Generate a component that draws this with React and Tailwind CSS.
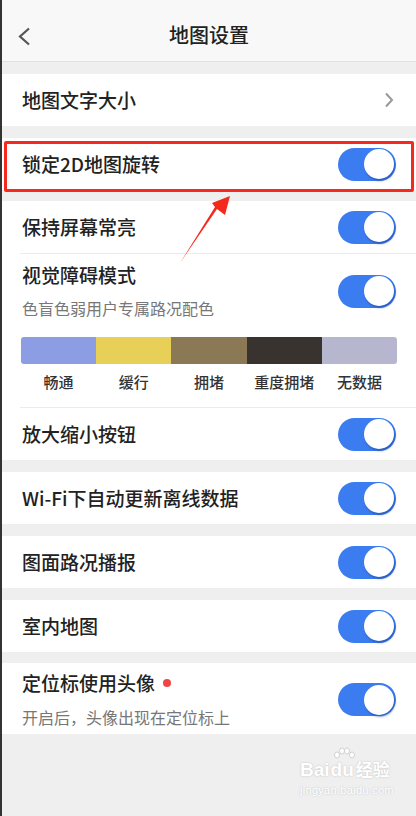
import React from "react";

const font = { fontFamily: '"Noto Sans CJK SC", "Noto Sans", sans-serif' };

function Toggle() {
  return (
    <div className="w-[58px] h-[33px] rounded-full bg-[#3b7cf0] flex items-center justify-end pr-[2px] shrink-0">
      <div className="w-[30px] h-[30px] rounded-full bg-white shadow-[1px_2px_2px_rgba(30,70,160,0.55)]" />
    </div>
  );
}

function Row({ label, children }) {
  return (
    <div className="h-[52px] bg-white flex items-center justify-between pl-[20px] pr-[20px]">
      <span className="text-[19px] font-medium text-[#222]">{label}</span>
      {children || <Toggle />}
    </div>
  );
}

const legend = [
  ["畅通", "bg-[#8c9de3]"],
  ["缓行", "bg-[#e8cf57]"],
  ["拥堵", "bg-[#8a7954]"],
  ["重度拥堵", "bg-[#38332f]"],
  ["无数据", "bg-[#b6b6cf]"],
];

export default function App() {
  return (
    <div className="relative w-[416px] min-h-[816px] bg-[#efefef] border-l-2 border-[#333]" style={font}>
      <header className="h-[62px] bg-[#f8f8f8] border-b border-[#e0e0e0] flex items-center justify-center pt-[8px] relative">
        <svg className="absolute left-[15px] top-[27px]" width="14" height="19" viewBox="0 0 14 19">
          <path d="M12 1.5 L3 9.5 L12 17.5" fill="none" stroke="#555" strokeWidth="2.2" />
        </svg>
        <h1 className="text-[20px] font-medium text-[#222]">地图设置</h1>
      </header>

      <div className="mt-3">
        <Row label="地图文字大小">
          <svg width="10" height="16" viewBox="0 0 10 16" className="mr-[2px]">
            <path d="M2 1.5 L8 8 L2 14.5" fill="none" stroke="#999" strokeWidth="2" />
          </svg>
        </Row>
      </div>

      <div className="mt-3">
        <Row label="锁定2D地图旋转" />
      </div>

      <div className="mt-[11px] bg-white">
        <Row label="保持屏幕常亮" />
        <div className="ml-[18px] h-px bg-[#ececec]" />
        <div className="pl-[20px] pr-[20px] pt-[8px] pb-[14px]">
          <div className="flex items-center justify-between">
            <div>
              <div className="text-[19px] leading-[26px] font-medium text-[#222]">视觉障碍模式</div>
              <div className="mt-[8px] text-[16px] leading-[24px] text-[#777]">色盲色弱用户专属路况配色</div>
            </div>
            <Toggle />
          </div>
          <div className="mt-[17px] -ml-px w-[376px] h-[27px] rounded-[3px] overflow-hidden flex">
            {legend.map(([t, c]) => (
              <div key={t} className={`flex-1 ${c}`} />
            ))}
          </div>
          <div className="mt-[7px] -ml-px w-[376px] flex">
            {legend.map(([t]) => (
              <div key={t} className="flex-1 text-center text-[15px] leading-[22px] font-medium text-[#333]">
                {t}
              </div>
            ))}
          </div>
        </div>
        <div className="ml-[18px] h-px bg-[#ececec]" />
        <Row label="放大缩小按钮" />
      </div>

      <div className="mt-3">
        <Row label="Wi-Fi下自动更新离线数据" />
      </div>
      <div className="mt-3">
        <Row label="图面路况播报" />
      </div>
      <div className="mt-3">
        <Row label="室内地图" />
      </div>

      <div className="mt-[11px] bg-white pl-[20px] pr-[20px] pt-[7px] pb-[5px] flex items-center justify-between">
        <div>
          <div className="flex items-center text-[19px] leading-[26px] font-medium text-[#222]">
            定位标使用头像
            <span className="ml-[8px] w-[8px] h-[8px] rounded-full bg-[#f04545]" />
          </div>
          <div className="mt-[9px] text-[16px] leading-[24px] text-[#777]">开启后，头像出现在定位标上</div>
        </div>
        <Toggle />
      </div>

      {/* annotation overlay */}
      <div className="absolute left-[2px] top-[141px] w-[410px] h-[51px] border-[3px] border-[#f52a1f] rounded-[2px]" />
      <svg className="absolute left-0 top-0 pointer-events-none" width="416" height="300" viewBox="0 0 416 300">
        <polygon points="178,263 215,209 223,215 228,196 210,203 213,207" fill="#f5281c" />
      </svg>

      {/* watermark */}
      <div className="absolute left-[298px] top-[760px] text-white [text-shadow:0_0_2px_#bdbdbd] leading-none">
        <div className="flex items-end text-[19px] font-bold" style={{ fontFamily: '"Liberation Sans", "Noto Sans CJK SC", sans-serif' }}>
          <span>Bai</span>
          <span className="relative ml-[1px]">
            <svg className="absolute left-[2px] -top-[13px]" width="22" height="14" viewBox="0 0 22 14">
              <g fill="white" stroke="#c8c8c8" strokeWidth="0.8">
                <ellipse cx="4" cy="8" rx="2.5" ry="3" />
                <ellipse cx="9" cy="4" rx="2.5" ry="3" />
                <ellipse cx="14" cy="4" rx="2.5" ry="3" />
                <ellipse cx="19" cy="8" rx="2.5" ry="3" />
              </g>
            </svg>
            du
          </span>
          <span className="ml-[2px] text-[17px]">经验</span>
        </div>
        <div className="mt-[6px] text-[11px] tracking-[0.3px]" style={{ fontFamily: '"Liberation Sans", sans-serif' }}>jingyan.baidu.com</div>
      </div>
    </div>
  );
}
